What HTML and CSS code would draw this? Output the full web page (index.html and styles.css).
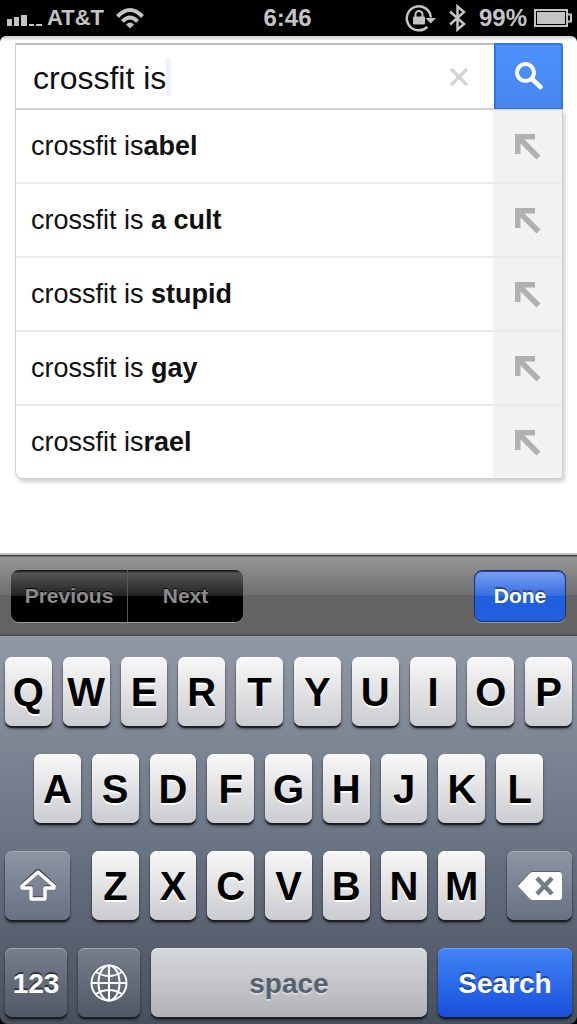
FILE: index.html
```html
<!DOCTYPE html>
<html lang="en">

<head>
    <meta charset="UTF-8" />
    <meta name="viewport" content="width=device-width, initial-scale=1.0" />
    <title>Search</title>
    <link rel="stylesheet" href="styles.css">
</head>

<body>
    <!-- shared icon -->
    <svg class="defs" width="0" height="0" aria-hidden="true">
        <symbol id="fill-arrow" viewBox="0 0 26 26">
            <path d="M0 0H20V5.500H9.500L25.500 21.500 21.500 25.500 5.500 9.500V20H0Z" fill="#b0b0b0" />
        </symbol>
    </svg>

    <header class="status">
        <div class="status-left">
            <svg class="signal" width="36" height="18" viewBox="0 0 36 18" fill="#c4c4c4">
                <rect x="0" y="10" width="5" height="7" />
                <rect x="7" y="8" width="5" height="9" />
                <rect x="14" y="6" width="6" height="11" />
                <rect x="22" y="15" width="5" height="2" />
                <rect x="29" y="15" width="6" height="2" />
            </svg>
            <span class="carrier">AT&amp;T</span>
            <svg class="wifi" width="28" height="21" viewBox="0 0 28 21" fill="none" stroke="#c4c4c4" stroke-width="4">
                <path d="M1.500 8.500Q14-4.500 26.500 8.500" />
                <path d="M6.500 13.500Q14 5.500 21.500 13.500" />
                <path d="M10 16.500Q14 12.500 18 16.500L14 20.500Z" fill="#c4c4c4" stroke="none" />
            </svg>
        </div>
        <span class="clock">6:46</span>
        <div class="status-right">
            <svg class="lock" width="31" height="28" viewBox="0 0 31 28" fill="none" stroke="#c4c4c4" stroke-width="2.500">
                <path d="M22.300 22.800A12 12 0 1 1 25.800 13.500" />
                <path d="M20.500 14H31L25.700 19.500Z" fill="#c4c4c4" stroke="none" />
                <rect x="8" y="12.500" width="12" height="8" rx="1" fill="#c4c4c4" stroke="none" />
                <path d="M10.500 13V10.500A3.500 3.500 0 0 1 17.500 10.500V13" stroke-width="2" />
            </svg>
            <svg class="bluetooth" width="17" height="28" viewBox="0 0 17 28" fill="none" stroke="#c4c4c4" stroke-width="2.500">
                <path d="M1 7.500L15 20 8.500 25.500V2.500L15 8 1 20.500" />
            </svg>
            <span class="percent">99%</span>
            <svg class="battery" width="38" height="18" viewBox="0 0 38 18">
                <path d="M1 1H33V17H1Z" fill="none" stroke="#c4c4c4" stroke-width="2" />
                <rect x="3" y="3" width="28" height="12" fill="#c4c4c4" />
                <path d="M34 5.500H37V12.500H34" fill="none" stroke="#c4c4c4" stroke-width="2" />
            </svg>
        </div>
    </header>

    <main class="page">
        <form class="search" action="">
            <div class="field">
                <input type="text" id="query" name="query" value="crossfit is" aria-label="Search" autocomplete="off" />
                <span class="caret"></span>
            </div>
            <button type="reset" class="clear" aria-label="Clear">
                <svg width="20" height="20" viewBox="0 0 20 20" stroke="#d5d5d5" stroke-width="3.500">
                    <path d="M2 2L18 18M18 2L2 18" />
                </svg>
            </button>
            <button type="button" class="go" aria-label="Search">
                <svg width="28" height="28" viewBox="0 0 28 28" fill="none" stroke="#fff">
                    <circle cx="10.500" cy="10.500" r="8.500" stroke-width="4" />
                    <path d="M17 17L25.500 25" stroke-width="4.500" stroke-linecap="round" />
                </svg>
            </button>
        </form>

        <ul class="suggestions">
            <li>
                <a href="#">crossfit is<b>abel</b></a>
                <button type="button" class="fill" aria-label="Use suggestion"><svg width="26" height="26"><use href="#fill-arrow" /></svg></button>
            </li>
            <li>
                <a href="#">crossfit is <b>a cult</b></a>
                <button type="button" class="fill" aria-label="Use suggestion"><svg width="26" height="26"><use href="#fill-arrow" /></svg></button>
            </li>
            <li>
                <a href="#">crossfit is <b>stupid</b></a>
                <button type="button" class="fill" aria-label="Use suggestion"><svg width="26" height="26"><use href="#fill-arrow" /></svg></button>
            </li>
            <li>
                <a href="#">crossfit is <b>gay</b></a>
                <button type="button" class="fill" aria-label="Use suggestion"><svg width="26" height="26"><use href="#fill-arrow" /></svg></button>
            </li>
            <li>
                <a href="#">crossfit is<b>rael</b></a>
                <button type="button" class="fill" aria-label="Use suggestion"><svg width="26" height="26"><use href="#fill-arrow" /></svg></button>
            </li>
        </ul>
    </main>

    <div class="toolbar">
        <div class="segment">
            <button type="button">Previous</button>
            <button type="button">Next</button>
        </div>
        <button type="button" class="done">Done</button>
    </div>

    <div class="keyboard">
        <div class="row">
            <button type="button" class="key">Q</button>
            <button type="button" class="key">W</button>
            <button type="button" class="key">E</button>
            <button type="button" class="key">R</button>
            <button type="button" class="key">T</button>
            <button type="button" class="key">Y</button>
            <button type="button" class="key">U</button>
            <button type="button" class="key">I</button>
            <button type="button" class="key">O</button>
            <button type="button" class="key">P</button>
        </div>
        <div class="row row-home">
            <button type="button" class="key">A</button>
            <button type="button" class="key">S</button>
            <button type="button" class="key">D</button>
            <button type="button" class="key">F</button>
            <button type="button" class="key">G</button>
            <button type="button" class="key">H</button>
            <button type="button" class="key">J</button>
            <button type="button" class="key">K</button>
            <button type="button" class="key">L</button>
        </div>
        <div class="row row-lower">
            <button type="button" class="key dark shift" aria-label="Shift">
                <svg width="38" height="34" viewBox="0 0 38 34" fill="none" stroke-width="3.500" stroke-linejoin="round">
                    <path d="M19 1L35 16V18H26V28Q26 29 25 29H13Q12 29 12 28V18H3V16Z" stroke="#3f4855" />
                    <path d="M19 3L35 17V19H26V29Q26 30 25 30H13Q12 30 12 29V19H3V17Z" stroke="#fff" />
                </svg>
            </button>
            <div class="letters">
                <button type="button" class="key">Z</button>
                <button type="button" class="key">X</button>
                <button type="button" class="key">C</button>
                <button type="button" class="key">V</button>
                <button type="button" class="key">B</button>
                <button type="button" class="key">N</button>
                <button type="button" class="key">M</button>
            </div>
            <button type="button" class="key dark delete" aria-label="Delete">
                <svg width="44" height="30" viewBox="0 0 44 30">
                    <path d="M0 14L12 1Q13 0 15 0H41Q44 0 44 3V25Q44 28 41 28H15Q13 28 12 27Z" fill="#555e6c" />
                    <path d="M0 15L12 2Q13 1 15 1H41Q44 1 44 4V26Q44 29 41 29H15Q13 29 12 28Z" fill="#fff" />
                    <path d="M19 7L34 23M34 7L19 23" stroke="#737c8b" stroke-width="4.500" />
                </svg>
            </button>
        </div>
        <div class="row">
            <button type="button" class="key dark deep numbers">123</button>
            <button type="button" class="key dark deep globe" aria-label="Next keyboard">
                <svg width="38" height="40" viewBox="0 0 38 40" fill="none" stroke="#fff" stroke-width="2">
                    <path d="M2 13A18 18 0 0 1 36 13" stroke="#303743" />
                    <circle cx="19" cy="19" r="17.500" />
                    <ellipse cx="19" cy="19" rx="10.500" ry="17.500" />
                    <path d="M19 1V37M1 19H37M6 8Q19 16 32 8M6 30Q19 22 32 30" />
                </svg>
            </button>
            <button type="button" class="key space">space</button>
            <button type="button" class="key submit">Search</button>
        </div>
    </div>
</body>

</html>
```

FILE: styles.css
```css
* {
    box-sizing: border-box;
}

body {
    font-family: "Liberation Sans", Arial, sans-serif;
    margin: 0;
    min-height: 100vh;
    display: flex;
    flex-direction: column;
    background-color: #000;
}

button {
    font-family: inherit;
    font-weight: bold;
    margin: 0;
    padding: 0;
    border: none;
    cursor: pointer;
    display: flex;
    align-items: center;
    justify-content: center;
}

svg {
    display: block;
    flex: none;
}

.defs {
    position: absolute;
}

/* status bar */
.status {
    display: grid;
    grid-template-columns: 1fr auto 1fr;
    align-items: center;
    height: 36px;
    padding: 0 5px 0 7px;
    background-color: #000;
    color: #c4c4c4;
    font-size: 24px;
    font-weight: bold;
}

.status-left,
.status-right {
    display: flex;
    align-items: center;
}

.status-left {
    gap: 4px;
}

.status-right {
    justify-content: flex-end;
    gap: 7px;
}

.clock {
    margin-right: 4px;
}

.carrier {
    font-size: 22px;
}

.wifi {
    margin-left: 8px;
}

.bluetooth {
    margin: 0 6px;
}

/* page */
.page {
    flex: 1;
    padding: 7px 14px 40px 15px;
    background: linear-gradient(#ccc, #fff 5px);
    border-radius: 6px 6px 0 0;
}

.search {
    display: flex;
    height: 67px;
    border: 1px solid #d0d0d0;
    border-top: 2px solid #bdbdbd;
    border-bottom: 2px solid #d4d4d4;
    border-right: none;
    background-color: #fff;
}

.field {
    flex: 1;
    min-width: 0;
    display: flex;
    align-items: center;
    padding-left: 17px;
}

.field input {
    field-sizing: content;
    max-width: 100%;
    padding: 2px 0 0;
    border: none;
    outline: none;
    background: none;
    color: #111;
    font-family: inherit;
    font-size: 32px;
    line-height: 40px;
}

.caret {
    width: 5px;
    height: 38px;
    background-color: #eef1fe;
}

.clear {
    width: 70px;
    background: none;
}

.go {
    width: 69px;
    margin: -2px 0 -1px;
    padding-bottom: 2px;
    border: 2px solid #2f74ee;
    border-bottom-width: 1px;
    border-radius: 0 4px 0 0;
    background: linear-gradient(#4d90fe, #4787ed);
}

.suggestions {
    list-style: none;
    margin: 0;
    padding: 0;
    background-color: #fff;
    border: 1px solid #d0d0d0;
    border-top: none;
    border-radius: 0 0 4px 8px;
    box-shadow: 2px 3px 4px rgba(0, 0, 0, 0.2);
    overflow: hidden;
}

.suggestions li {
    display: flex;
    height: 74px;
    border-bottom: 2px solid #ebebeb;
}

.suggestions li:last-child {
    height: 72px;
    border-bottom: none;
}

.suggestions a {
    flex: 1;
    padding-left: 15px;
    color: #111;
    font-size: 27px;
    line-height: 72px;
    text-decoration: none;
}

.fill {
    width: 69px;
    padding-top: 2px;
    background-color: #f2f2f2;
}

/* form assistant bar */
.toolbar {
    display: flex;
    align-items: center;
    justify-content: space-between;
    height: 83px;
    padding: 2px 11px 0;
    border-top: 2px solid #c0c0c0;
    border-bottom: 2px solid #505357;
    background: linear-gradient(#404040 1px, #969696 2px, #707070 50%, #636363 51%, #636363);
}

.toolbar button {
    height: 52px;
    font-size: 21px;
}

.segment {
    display: flex;
    border-radius: 8px;
    box-shadow: 0 1px 0 #999;
    overflow: hidden;
}

.segment button {
    width: 116px;
    color: #8c8c8c;
    text-shadow: 0 -1px 0 #000;
    background: linear-gradient(#1c1c1c 1px, #555 3px, #222 50%, #000 51%);
}

.segment button + button {
    border-left: 1px solid #555;
}

.toolbar .done {
    width: 92px;
    border: 1px solid #1c3170;
    border-radius: 8px;
    color: #fff;
    text-shadow: 0 -2px 0 #274c9d;
    background: linear-gradient(#7ba1f2, #376de0 50%, #215fde 51%, #245fe0);
    box-shadow: inset 0 1px 0 #2a428a, 0 1px 0 #999;
}

/* keyboard */
.keyboard {
    display: flex;
    flex-direction: column;
    gap: 28px;
    padding: 21px 5px 7px;
    border-radius: 0 0 8px 8px;
    background: linear-gradient(#9299a6, #717a89 45%, #48505e);
}

.row,
.letters {
    display: flex;
    gap: 11px;
}

.row-home {
    padding: 0 29px;
}

.row-lower {
    gap: 22px;
}

.letters {
    flex: 1;
}

.key {
    flex: 1;
    min-width: 0;
    height: 69px;
    padding-top: 2px;
    border-radius: 7px;
    color: #000;
    font-size: 40px;
    text-shadow: 0 2px 0 #fff;
    background: linear-gradient(#f8f8f8, #cbccd0);
    box-shadow: inset 0 1px 0 #fff, 0 2px 1px #1a1d22, 0 3px 3px rgba(0, 0, 0, 0.4);
}

.dark {
    color: #fff;
    background: linear-gradient(#8d95a3, #687283);
    text-shadow: 0 -2px 0 #303743;
    box-shadow: inset 0 1px 0 #a2a9b4, 0 2px 1px #1a1d22, 0 3px 3px rgba(0, 0, 0, 0.4);
}

.deep {
    background: linear-gradient(#777f8c, #505866);
}

.shift,
.delete {
    flex: none;
    width: 65px;
    padding-top: 0;
}

.numbers,
.globe {
    flex: none;
    width: 62px;
}

.numbers,
.space,
.submit {
    font-size: 28px;
}

.space {
    color: #556070;
    text-shadow: 0 2px 0 #d9dadb;
    background: linear-gradient(#d5d8da, #b1b2b6);
    box-shadow: inset 0 1px 0 #e6e8e9, 0 2px 1px #1a1d22, 0 3px 3px rgba(0, 0, 0, 0.4);
}

.submit {
    flex: none;
    width: 134px;
    color: #fff;
    text-shadow: 0 -2px 0 #1c459b;
    background: linear-gradient(#4285f5, #184fdc);
    box-shadow: inset 0 1px 0 #6ba0f8, 0 2px 1px #1a1d22, 0 3px 3px rgba(0, 0, 0, 0.4);
}
```
